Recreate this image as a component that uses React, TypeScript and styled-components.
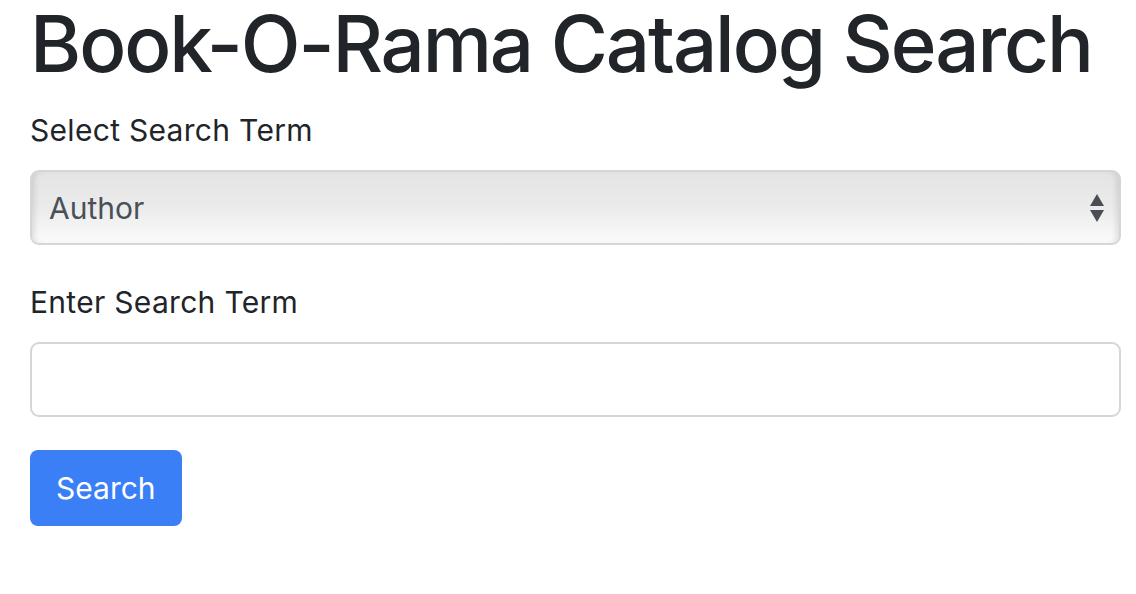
import styled, { createGlobalStyle } from 'styled-components';

const GlobalStyle = createGlobalStyle`
  html, body {
    margin: 0;
    padding: 0;
    background: #ffffff;
  }

  body {
    font-family: Inter, 'Liberation Sans', sans-serif;
    color: #212529;
  }
`;

const Page = styled.div`
  padding: 0 12px 0 30px;
`;

const Title = styled.h1`
  margin: -4px 0 0;
  font-size: 78px;
  font-weight: 500;
  line-height: 96px;
  letter-spacing: -2.1px;
  white-space: nowrap;
  color: #212529;
`;

const Form = styled.form`
  display: flex;
  flex-direction: column;
  align-items: flex-start;
  margin-top: 14px;
  padding-right: 3px;
`;

const FormGroup = styled.div`
  display: flex;
  flex-direction: column;
  width: 100%;
  margin-bottom: 33px;
`;

const Label = styled.label`
  font-size: 30px;
  line-height: 48px;
  font-weight: 400;
  letter-spacing: 0.3px;
  color: #212529;
  margin-bottom: 16px;
`;

const SelectBox = styled.div`
  position: relative;
  height: 75px;
  box-sizing: border-box;
  border: 2px solid #d3d6da;
  border-radius: 9px;
  background: linear-gradient(#e4e4e4 0%, #ebebeb 50%, #fbfbfb 100%);
  box-shadow: inset 6px 0 6px -4px rgba(0, 0, 0, 0.12),
    inset -6px 0 6px -4px rgba(0, 0, 0, 0.12);
  display: flex;
  align-items: center;
  padding: 0 16px 0 17px;
`;

const SelectValue = styled.span`
  flex: 1;
  font-size: 30px;
  color: #495057;
`;

const Arrows = styled.svg`
  width: 16px;
  height: 30px;
  margin-right: -2px;
`;

const TextInput = styled.input`
  height: 75px;
  box-sizing: border-box;
  border: 2px solid #d3d6da;
  border-radius: 9px;
  background: #ffffff;
  font-family: inherit;
  font-size: 30px;
  padding: 0 18px;
  outline: none;
`;

const Button = styled.button`
  height: 76px;
  padding: 0 26px;
  border: none;
  border-radius: 8px;
  background: #3a7ff6;
  color: #ffffff;
  font-family: inherit;
  font-size: 30px;
  cursor: pointer;
`;

export default function App() {
  return (
    <>
      <GlobalStyle />
      <Page>
        <Title>Book-O-Rama Catalog Search</Title>
        <Form>
          <FormGroup>
            <Label>Select Search Term</Label>
            <SelectBox>
              <SelectValue>Author</SelectValue>
              <Arrows viewBox="0 0 16 30">
                <polygon points="8,1 15,13 1,13" fill="#4a4e54" />
                <polygon points="1,17 15,17 8,29" fill="#4a4e54" />
              </Arrows>
            </SelectBox>
          </FormGroup>
          <FormGroup>
            <Label>Enter Search Term</Label>
            <TextInput type="text" />
          </FormGroup>
          <Button type="button">Search</Button>
        </Form>
      </Page>
    </>
  );
}
